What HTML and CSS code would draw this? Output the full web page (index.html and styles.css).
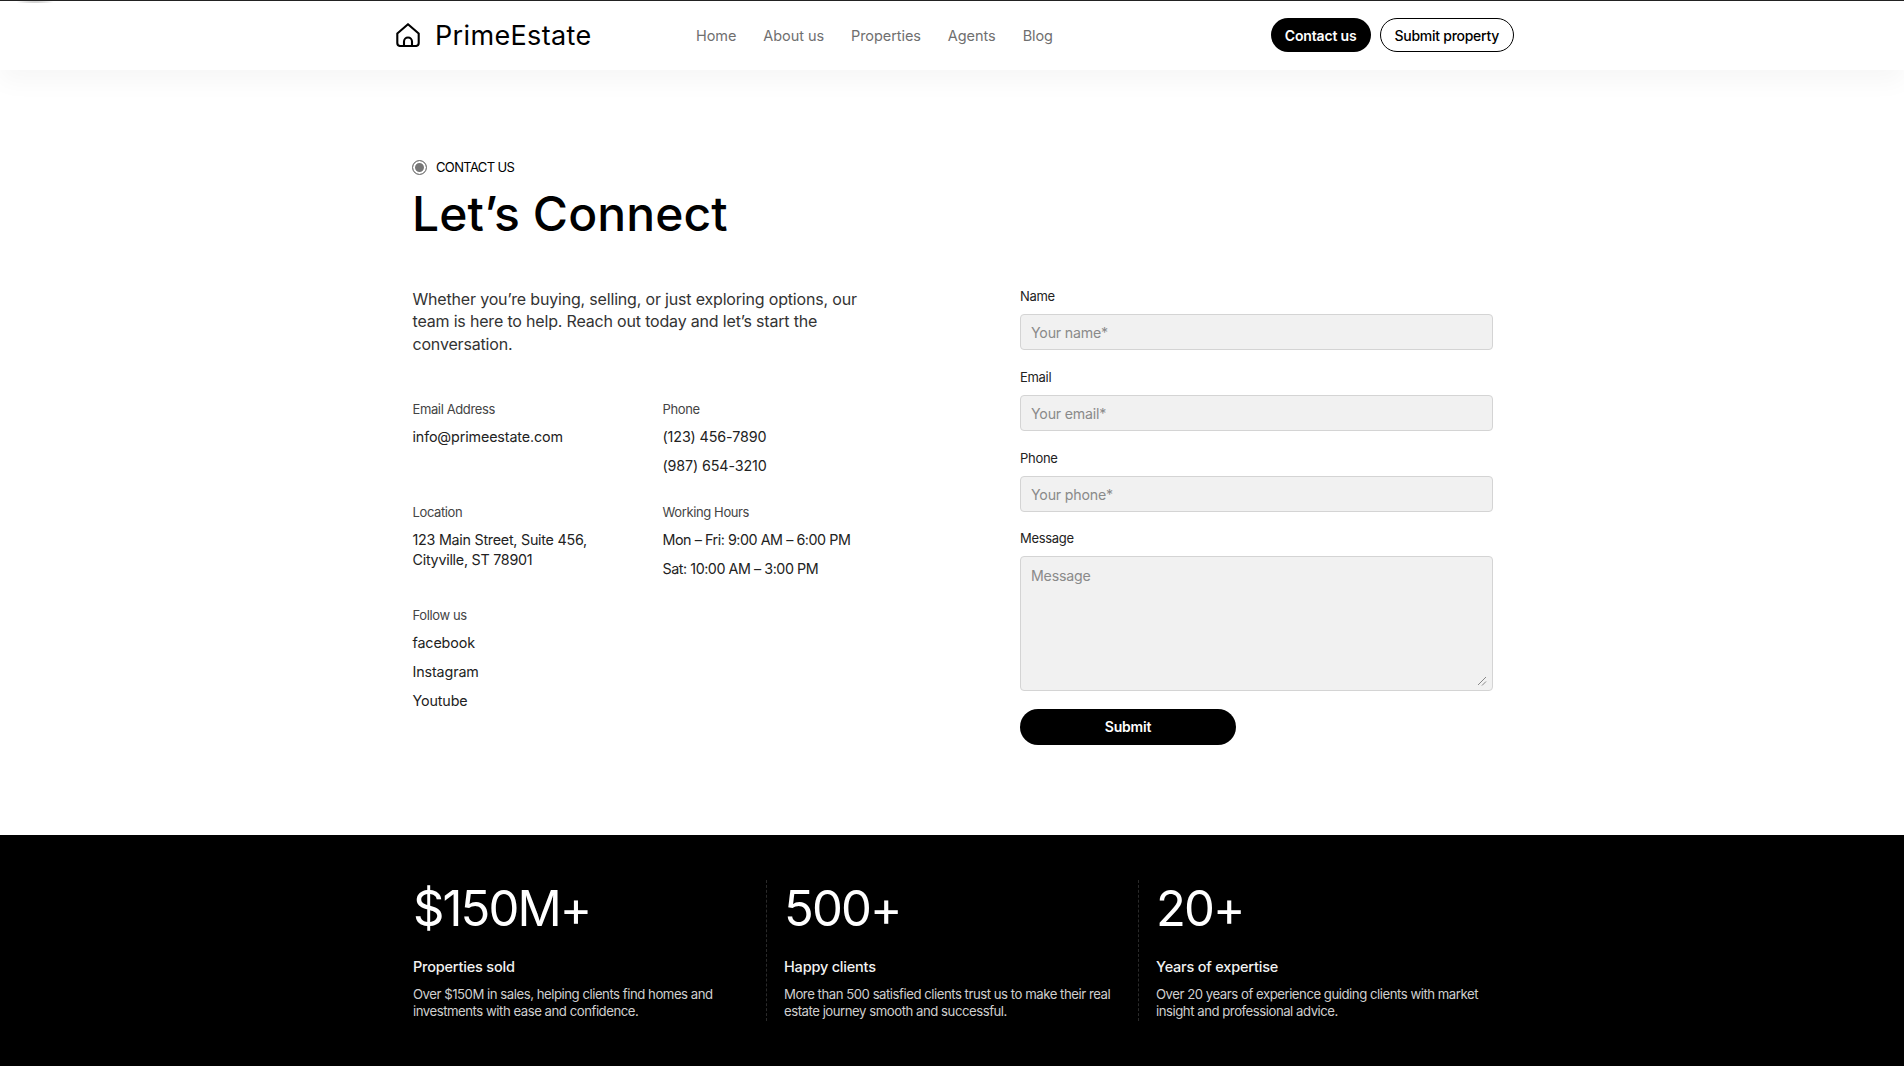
FILE: index.html
```html
<!DOCTYPE html>
<html lang="en">
<head>
<meta charset="utf-8">
<title>PrimeEstate</title>
<link rel="stylesheet" href="styles.css">
</head>
<body>
<header class="site-header">
  <div class="header-inner">
    <a class="logo">
      <svg class="logo-icon" viewBox="0 0 24 24" fill="none" stroke="#000" stroke-width="2.1" stroke-linejoin="round" stroke-linecap="round"><path d="M1.3 10.5 L12 1.2 L22.7 10.5 V20 A3 3 0 0 1 19.7 23 H4.3 A3 3 0 0 1 1.3 20 Z"/><path d="M8 23 V18.5 A4 4 0 0 1 16 18.5 V23"/></svg>
      <span class="logo-text">PrimeEstate</span>
    </a>
    <nav class="nav">
      <a>Home</a><a>About us</a><a>Properties</a><a>Agents</a><a>Blog</a>
    </nav>
    <div class="header-actions">
      <a class="btn btn-dark">Contact us</a>
      <a class="btn btn-outline">Submit property</a>
    </div>
  </div>
</header>
<main class="contact">
  <div class="eyebrow"><span class="dot"></span><span class="eyebrow-text">CONTACT US</span></div>
  <h1 class="title">Let’s Connect</h1>
  <div class="contact-grid">
    <section class="info">
      <p class="lead">Whether you’re buying, selling, or just exploring options, our team is here to help. Reach out today and let’s start the conversation.</p>
      <div class="info-grid">
        <div class="info-block"><div class="info-label">Email Address</div><div class="info-value">info@primeestate.com</div></div>
        <div class="info-block"><div class="info-label">Phone</div><div class="info-value">(123) 456-7890</div><div class="info-value">(987) 654-3210</div></div>
        <div class="info-block"><div class="info-label">Location</div><div class="info-value info-address">123 Main Street, Suite 456,<br>Cityville, ST 78901</div></div>
        <div class="info-block"><div class="info-label">Working Hours</div><div class="info-value info-hours">Mon – Fri: 9:00 AM – 6:00 PM</div><div class="info-value info-hours">Sat: 10:00 AM – 3:00 PM</div></div>
        <div class="info-block"><div class="info-label">Follow us</div><div class="info-value">facebook</div><div class="info-value">Instagram</div><div class="info-value">Youtube</div></div>
      </div>
    </section>
    <form class="form">
      <label class="field"><span class="field-label">Name</span><input class="control" placeholder="Your name*"></label>
      <label class="field"><span class="field-label">Email</span><input class="control" placeholder="Your email*"></label>
      <label class="field"><span class="field-label">Phone</span><input class="control" placeholder="Your phone*"></label>
      <label class="field field-area"><span class="field-label">Message</span><textarea class="control control-area" placeholder="Message"></textarea>
        <svg class="grip" viewBox="0 0 10 10" fill="none" stroke="#888" stroke-width="1"><path d="M1 9 L9 1"/><path d="M5 9.5 L9 5.5"/></svg>
      </label>
      <button class="submit" type="button">Submit</button>
    </form>
  </div>
</main>
<section class="stats">
  <div class="stats-inner">
    <div class="stat"><div class="stat-num">$150M+</div><div class="stat-title">Properties sold</div><p class="stat-desc">Over $150M in sales, helping clients find homes and investments with ease and confidence.</p></div>
    <div class="stat"><div class="stat-num">500+</div><div class="stat-title">Happy clients</div><p class="stat-desc">More than 500 satisfied clients trust us to make their real estate journey smooth and successful.</p></div>
    <div class="stat"><div class="stat-num">20+</div><div class="stat-title">Years of expertise</div><p class="stat-desc">Over 20 years of experience guiding clients with market insight and professional advice.</p></div>
  </div>
</section>
</body>
</html>
```
FILE: styles.css
```css
* { box-sizing: border-box; }
html, body { margin: 0; padding: 0; }
body { background: #fff; color: #000; font-family: "Inter", "Noto Sans", sans-serif; height: 1079px; overflow: hidden; }

.site-header { position: relative; height: 70px; border-top: 1px solid #222; background: #fff; box-shadow: 0 12px 24px rgba(0,0,0,.035); }
.site-header::before { content: ""; position: absolute; left: 14px; top: 0; width: 42px; height: 2px; background: radial-gradient(closest-side, #aaa, rgba(170,170,170,0)); }
.header-inner { width: 1118px; margin-left: 396px; height: 68px; display: flex; align-items: center; }
.logo { display: flex; align-items: center; gap: 15px; width: 300px; }
.logo-icon { width: 24px; height: 24px; margin-top: -1px; }
.logo-text { font-size: 27px; letter-spacing: .35px; font-weight: 400; }
.nav { display: flex; gap: 27px; font-size: 14.5px; color: #6f6f6f; letter-spacing: -.07px; }
.header-actions { margin-left: auto; display: flex; gap: 9px; }
.btn { height: 34px; padding: 0 14px; border-radius: 17px; display: flex; align-items: center; font-size: 14px; font-weight: 600; letter-spacing: -.16px; }
.btn-dark { background: #000; color: #fff; }
.btn-outline { background: #fff; color: #000; border: 1px solid #000; font-weight: 500; letter-spacing: -.27px; }

.contact { width: 1080px; margin: 0 auto; padding-top: 88px; height: 765px; }
.eyebrow { display: flex; align-items: center; gap: 9px; height: 18px; }
.dot { width: 15px; height: 15px; border-radius: 50%; border: 1px solid #777; background: #777; box-shadow: inset 0 0 0 2px #fff; }
.eyebrow-text { font-size: 13px; letter-spacing: -.65px; }
.title { margin: 6px 0 0; font-size: 48px; line-height: 64px; font-weight: 450; letter-spacing: .1px; }
.contact-grid { display: grid; grid-template-columns: 608px 473px; margin-top: 42px; }
.info { padding-left: .5px; }
.lead { margin: 0; font-size: 16px; line-height: 22.4px; color: #333; width: 450px; letter-spacing: -.18px; }
.info-grid { display: grid; grid-template-columns: 250px 1fr; margin-top: 45px; row-gap: 18px; }
.info-label { font-size: 13px; line-height: 18px; color: #444; letter-spacing: -.38px; margin-bottom: 9px; }
.info-value { font-size: 14.3px; line-height: 20px; color: #222; margin-bottom: 9px; letter-spacing: -.12px; }
.info-address { letter-spacing: -.25px; }
.info-hours { letter-spacing: -.45px; }

.form { display: flex; flex-direction: column; align-items: flex-start; margin-top: -1px; }
.field { position: relative; display: flex; flex-direction: column; width: 473px; margin-bottom: 18px; }
.field-area { margin-top: -1px; }
.field-label { font-size: 13px; line-height: 18px; color: #222; margin-bottom: 9px; letter-spacing: -.3px; }
.control { height: 36px; width: 100%; background: #f1f1f1; border: 1px solid #d4d4d4; border-radius: 4px; padding: 0 10px; font-family: inherit; font-size: 14.2px; letter-spacing: -.2px; color: #333; outline: none; }
.control::placeholder { color: #8a8a8a; opacity: 1; }
.control-area { height: 135px; padding: 10px; display: block; resize: none; }
.grip { position: absolute; right: 6px; bottom: 5px; width: 10px; height: 10px; }
.submit { width: 216px; height: 36px; padding: 0 0 1px; border: 0; border-radius: 18px; background: #000; color: #fff; font-family: inherit; font-size: 14px; font-weight: 600; letter-spacing: -.2px; }

.stats { background: #000; height: 231px; padding-top: 45px; }
.stats-inner { width: 1080px; margin: 0 auto; display: grid; grid-template-columns: 372px 372px 336px; }
.stat { height: 141px; padding-right: 17px; }
.stat:first-child { padding-left: 1px; }
.stat:last-child { padding-right: 0; }
.stat + .stat { border-left: 1px dashed #2a2a2a; padding-left: 17px; margin-left: -18px; }
.stat-num { font-size: 49px; line-height: 58px; color: #fff; font-weight: 400; letter-spacing: -1.9px; }
.stat-title { font-size: 14.5px; line-height: 20px; margin-top: 19px; color: #f2f2f2; font-weight: 500; letter-spacing: -.2px; }
.stat-desc { margin: 9px 0 0; font-size: 13.2px; line-height: 17px; color: #cfcfcf; letter-spacing: -.48px; }
```
